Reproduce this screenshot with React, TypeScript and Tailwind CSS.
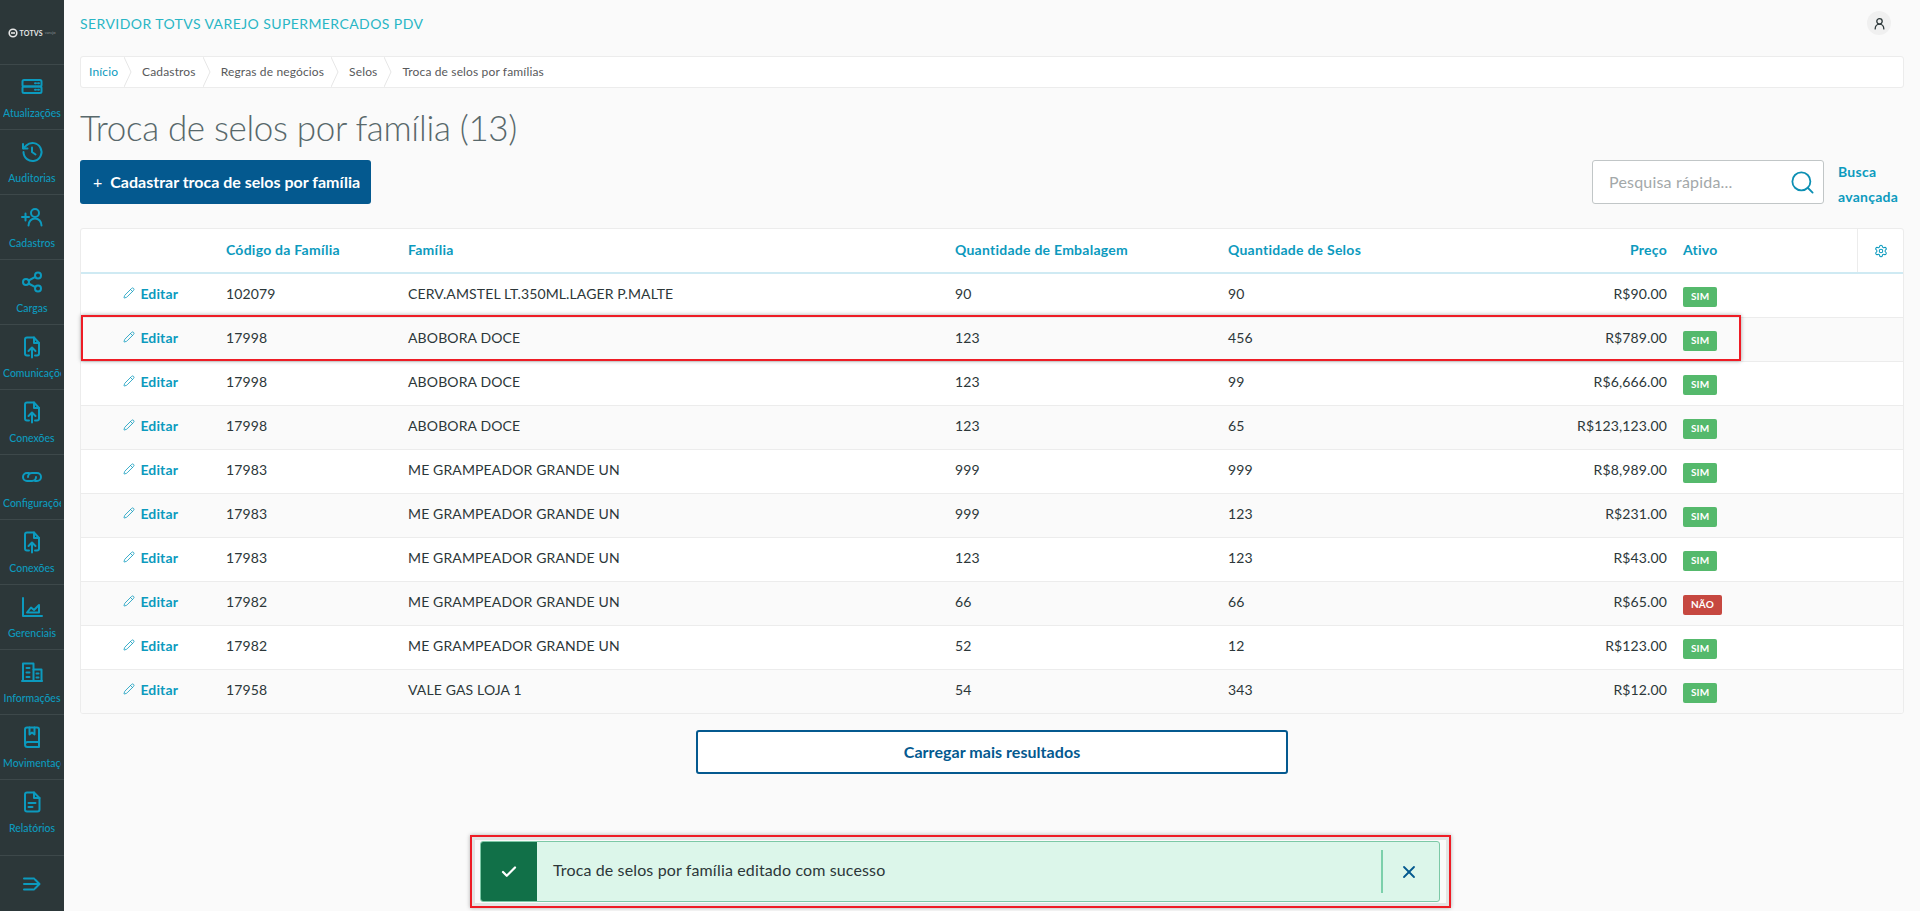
import React from "react";
import { Check, X, Search, Pencil, Settings } from "lucide-react";

const navIcons: Record<string, React.ReactNode> = {
  server: (<><rect x="2.500" y="5" width="19" height="6.500" rx="1.500"/><rect x="2.500" y="11.500" width="19" height="6.500" rx="1.500"/><path d="M15 8.200h1M18 8.200h1M15 14.800h1M18 14.800h1"/></>),
  history: (<><path d="M3.500 12a9 9 0 1 0 2.800-6.500L3.500 8.200"/><path d="M3 4v4.500h4.500"/><path d="M12 7.500V12l3.500 2.500"/></>),
  addUser: (<><path d="M2 12h7M5.500 8.500v7"/><circle cx="15" cy="8" r="4"/><path d="M8.500 20.500c0-4 2.800-7 6.500-7s6.500 3 6.500 7"/></>),
  share: (<><circle cx="18" cy="5.500" r="3"/><circle cx="6" cy="12" r="3"/><circle cx="18" cy="18.500" r="3"/><path d="M8.600 10.500l6.800-3.600M8.600 13.500l6.800 3.600"/></>),
  upload: (<><path d="M9 20.500H7a2 2 0 0 1-2-2v-14a2 2 0 0 1 2-2h7l5 5.500v10.500a2 2 0 0 1-2 2h-2"/><path d="M14 2.500v5.500h5"/><path d="M12 22.500V13M8.500 16l3.500-3.500 3.500 3.500"/></>),
  link: (<><path d="M9 8H7a4 4 0 0 0 0 8h5a4 4 0 0 0 4-4"/><path d="M15 16h2a4 4 0 0 0 0-8h-5a4 4 0 0 0-4 4"/></>),
  chart: (<><path d="M3 3v18h19"/><path d="M7 17.500l4-5 3 2.500 5-5v7.500z"/></>),
  building: (<><path d="M3 21V3.500h10.500V21"/><path d="M13.500 9.500H21.500V21"/><path d="M2 21h20"/><path d="M6.500 8h3M6.500 12.500h3M6.500 17h3M16.500 13.500h2M16.500 17.500h2"/></>),
  book: (<><path d="M5 19V4.500a2 2 0 0 1 2-2h10a2 2 0 0 1 2 2v17.500H7.500A2.500 2.500 0 0 1 5 19.500a2.500 2.500 0 0 1 2.500-2.500H19"/><path d="M9.500 2.500v7l2.500-2 2.500 2v-7" /></>),
  file: (<><path d="M7 2.500h7l5.500 5.500v11.500a2 2 0 0 1-2 2H7a2 2 0 0 1-2-2v-15a2 2 0 0 1 2-2z"/><path d="M14 2.500V8h5.500"/><path d="M8.500 13h7M8.500 17h4"/></>),
};

const nav: [string, string][] = [
  ["Atualizações", "server"],
  ["Auditorias", "history"],
  ["Cadastros", "addUser"],
  ["Cargas", "share"],
  ["Comunicações", "upload"],
  ["Conexões", "upload"],
  ["Configurações", "link"],
  ["Conexões", "upload"],
  ["Gerenciais", "chart"],
  ["Informações", "building"],
  ["Movimentações", "book"],
  ["Relatórios", "file"],
];

const rows: [string, string, string, string, string, boolean][] = [
  ["102079", "CERV.AMSTEL LT.350ML.LAGER P.MALTE", "90", "90", "R$90.00", true],
  ["17998", "ABOBORA DOCE", "123", "456", "R$789.00", true],
  ["17998", "ABOBORA DOCE", "123", "99", "R$6,666.00", true],
  ["17998", "ABOBORA DOCE", "123", "65", "R$123,123.00", true],
  ["17983", "ME GRAMPEADOR GRANDE UN", "999", "999", "R$8,989.00", true],
  ["17983", "ME GRAMPEADOR GRANDE UN", "999", "123", "R$231.00", true],
  ["17983", "ME GRAMPEADOR GRANDE UN", "123", "123", "R$43.00", true],
  ["17982", "ME GRAMPEADOR GRANDE UN", "66", "66", "R$65.00", false],
  ["17982", "ME GRAMPEADOR GRANDE UN", "52", "12", "R$123.00", true],
  ["17958", "VALE GAS LOJA 1", "54", "343", "R$12.00", true],
];

const cols = "grid grid-cols-[133px_182px_547px_273px_230px_233px_178px_46px]";

function Crumb({ children, first }: { children: React.ReactNode; first?: boolean }) {
  return (
    <div className={`relative flex h-full items-center ${first ? "pl-[8px] pr-[13px] text-[#0c9abe]" : "pl-[11px] pr-[14px] text-[#58595b]"}`}>
      {children}
      <svg className="absolute right-[-1px] top-0 h-full w-[8px]" viewBox="0 0 8 30" preserveAspectRatio="none" fill="none" stroke="#e6e6e6">
        <path d="M0 0l7 15L0 30" />
      </svg>
    </div>
  );
}

export default function App() {
  return (
    <div className="relative flex h-[911px] w-[1920px] overflow-hidden bg-[#fafafa] font-['Lato','Open_Sans',sans-serif] text-[14px] text-[#2c3739]">
      <aside className="flex w-[64px] shrink-0 flex-col bg-[#2c3739] text-[#0c9abe]">
        <div className="flex h-[65px] shrink-0 items-center justify-center gap-[1px] border-b border-[#3d484a] pt-[2px] text-[#e6e6e6]">
          <svg width="10" height="10" viewBox="0 0 10 10" fill="none" stroke="currentColor" strokeWidth="1.600"><circle cx="5" cy="5" r="3.800"/><path d="M3 5h4"/></svg>
          <span className="text-[7px] font-bold leading-none tracking-[0.2px]">TOTVS</span>
          <span className="ml-[1px] text-[4px] leading-none text-[#8a9294]">varejo</span>
        </div>
        {nav.map(([label, icon], i) => (
          <div key={i} className={`flex shrink-0 flex-col items-center overflow-hidden border-b border-[#3d484a] px-[3px] pt-[10px] ${i === nav.length - 1 ? "h-[76px]" : "h-[65px]"}`}>
            <svg width="24" height="24" viewBox="0 0 24 24" fill="none" stroke="currentColor" strokeWidth="2" strokeLinecap="round" strokeLinejoin="round">{navIcons[icon]}</svg>
            <span className="mt-[6px] w-full overflow-hidden whitespace-nowrap text-center text-[10.500px] font-medium leading-[16px]">{label}</span>
          </div>
        ))}
        <div className="flex flex-1 items-center justify-center">
          <svg width="20" height="20" viewBox="0 0 20 20" fill="none" stroke="currentColor" strokeWidth="2" strokeLinecap="round" strokeLinejoin="round"><path d="M2 4.500h10M2 10h15M2 15.500h10M13 5.500l4.500 4.500-4.500 4.500"/></svg>
        </div>
      </aside>

      <main className="flex min-w-0 flex-1 flex-col px-[16px]">
        <header className="flex h-[46px] shrink-0 items-center justify-between">
          <h2 className="text-[14px] tracking-[0.42px] text-[#29b6c5]">SERVIDOR TOTVS VAREJO SUPERMERCADOS PDV</h2>
          <div className="mr-[13px] flex h-[24px] w-[24px] items-center justify-center rounded-full bg-[#f0f0f0]">
            <svg width="13" height="13" viewBox="0 0 24 24" fill="none" stroke="#2c3739" strokeWidth="2.400" strokeLinecap="round"><circle cx="12" cy="8" r="5"/><path d="M4 22c0-5 3.500-9 8-9s8 4 8 9"/></svg>
          </div>
        </header>

        <nav className="mt-[10px] flex h-[32px] shrink-0 items-center rounded-[3px] border border-[#ececec] bg-white text-[12px] tracking-[0.14px]">
          <Crumb first>Início</Crumb>
          <Crumb>Cadastros</Crumb>
          <Crumb>Regras de negócios</Crumb>
          <Crumb>Selos</Crumb>
          <div className="pl-[11px] text-[#58595b]">Troca de selos por famílias</div>
        </nav>

        <h1 className="mt-[15px] h-[57px] text-[35px] font-light leading-[48px] tracking-[-0.33px] text-[#58686b]">Troca de selos por família (13)</h1>

        <div className="flex h-[44px] shrink-0 items-start justify-between">
          <button className="flex h-[44px] w-[291px] items-center rounded-[3px] bg-[#04598f] pl-[13px] text-[16px] font-bold text-white">
            <span className="mr-[8px] text-[16px] font-normal">+</span>Cadastrar troca de selos por família
          </button>
          <div className="flex items-start">
            <div className="flex h-[44px] w-[232px] items-center justify-between rounded-[3px] border border-[#c1c6c7] bg-white pl-[16px] pr-[7px]">
              <span className="text-[16px] tracking-[0.2px] text-[#a3a8a9]">Pesquisa rápida...</span>
              <Search size={27} className="text-[#0c8fb3]" strokeWidth={1.600} />
            </div>
            <div className="ml-[14px] w-[66px] text-[14px] font-bold leading-[24.500px] tracking-[0.25px] text-[#0c9abe]">Busca avançada</div>
          </div>
        </div>

        <div className="mt-[24px] shrink-0 overflow-hidden rounded-[3px] border border-[#ececec] bg-white">
          <div className={`${cols} h-[45px] items-center border-b-2 border-[#cfeaf3] text-[14px] font-bold tracking-[0.25px] text-[#0c9abe]`}>
            <div />
            <div className="pb-[2px] pl-[12px]">Código da Família</div>
            <div className="pb-[2px] pl-[12px]">Família</div>
            <div className="pb-[2px] pl-[12px]">Quantidade de Embalagem</div>
            <div className="pb-[2px] pl-[12px]">Quantidade de Selos</div>
            <div className="pb-[2px] pr-[12px] text-right">Preço</div>
            <div className="pb-[2px] pl-[4px]">Ativo</div>
            <div className="flex h-full items-center justify-center border-l border-[#ececec]">
              <Settings size={14} strokeWidth={1.800} />
            </div>
          </div>
          {rows.map((r, i) => (
            <div key={i} className={`${cols} h-[44px] items-center border-b border-[#ececec] tracking-[0.13px] last:h-[43px] last:border-b-0 ${i % 2 ? "bg-[#fafafa]" : "bg-white"}`}>
              <div className="flex items-center justify-end gap-[5px] pb-[5px] pr-[36px] font-bold text-[#0c9abe]">
                <Pencil size={12} strokeWidth={1.600} />
                <span>Editar</span>
              </div>
              <div className="pb-[5px] pl-[12px]">{r[0]}</div>
              <div className="pb-[5px] pl-[12px]">{r[1]}</div>
              <div className="pb-[5px] pl-[12px]">{r[2]}</div>
              <div className="pb-[5px] pl-[12px]">{r[3]}</div>
              <div className="pb-[5px] pr-[12px] text-right">{r[4]}</div>
              <div>
                <span className={`ml-[4px] inline-flex h-[20px] items-center rounded-[2px] px-[8px] text-[10px] font-bold text-white ${r[5] ? "bg-[#55b96c]" : "bg-[#c64840]"}`}>{r[5] ? "SIM" : "NÃO"}</span>
              </div>
              <div />
            </div>
          ))}
        </div>

        <div className="mt-[16px] flex shrink-0 justify-center">
          <button className="h-[44px] w-[592px] rounded-[3px] border-2 border-[#04598f] bg-white text-[16px] font-bold tracking-[0.05px] text-[#04598f]">Carregar mais resultados</button>
        </div>
      </main>

      {/* red annotation over the second row */}
      <div className="pointer-events-none absolute left-[81px] top-[315px] h-[46px] w-[1660px] border-2 border-[#ee1c25] shadow-[0_0_4px_rgba(0,0,0,0.35)]" />

      {/* toast with its red annotation */}
      <div className="absolute left-[470px] top-[835px] h-[73px] w-[981px] border-2 border-[#ee1c25] shadow-[0_0_4px_rgba(0,0,0,0.3)]">
        <div className="absolute inset-0 border-[3px] border-[#e4e4e4]" />
        <div className="absolute left-[8px] top-[4px] flex h-[61px] w-[960px] items-stretch overflow-hidden rounded-[3px] border border-[#7cc8a6] bg-[#dcf6ea]">
          <div className="flex w-[56px] shrink-0 items-center justify-center bg-[#117048] text-white">
            <Check size={18} strokeWidth={3} />
          </div>
          <div className="flex flex-1 items-center pb-[3px] pl-[16px] text-[16px] tracking-[0.13px] text-[#2c3739]">Troca de selos por família editado com sucesso</div>
          <div className="my-[8px] w-[2px] bg-[#7cd0ab]" />
          <div className="flex w-[56px] items-center justify-center pr-[5px] text-[#04598f]"><X size={20} strokeWidth={2.200} /></div>
        </div>
      </div>
    </div>
  );
}
